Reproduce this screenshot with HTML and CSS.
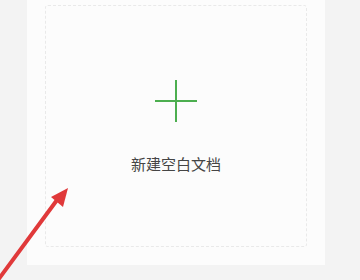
FILE: index.html
```html
<!DOCTYPE html>
<html lang="zh">
<head>
<meta charset="utf-8">
<link rel="stylesheet" href="styles.css">
</head>
<body>
<div class="panel">
  <div class="card">
    <svg class="plus" width="44" height="44" viewBox="0 0 44 44">
      <path d="M22 1V43M1 22H43" stroke="#4cae4f" stroke-width="2" fill="none"/>
    </svg>
    <div class="label">新建空白文档</div>
  </div>
</div>
<svg class="arrow" width="360" height="280" viewBox="0 0 360 280">
  <path d="M-2 280L57 200" stroke="#e0393a" stroke-width="4" stroke-linecap="round" fill="none"/>
  <path d="M68 188L51 197L63 207Z" fill="#e0393a"/>
</svg>
</body>
</html>
```
FILE: styles.css
```css
html, body {
  margin: 0;
  padding: 0;
}
body {
  width: 360px;
  height: 280px;
  background: #f3f3f3;
  overflow: hidden;
  position: relative;
  font-family: "Noto Sans CJK SC", "Noto Sans", sans-serif;
}
.panel {
  margin-left: 27px;
  width: 298px;
  height: 265px;
  box-sizing: border-box;
  background: #fcfcfc;
  padding: 5px 18px 18px 18px;
}
.card {
  height: 242px;
  box-sizing: border-box;
  border: 1px dashed #e9e9e9;
  border-radius: 3px;
  display: flex;
  flex-direction: column;
  align-items: center;
  padding-top: 73px;
}
.plus {
  display: block;
}
.label {
  margin-top: 31px;
  font-size: 15px;
  line-height: 20px;
  font-weight: 400;
  color: #454545;
}
.arrow {
  position: absolute;
  left: 0;
  top: 0;
}
```
